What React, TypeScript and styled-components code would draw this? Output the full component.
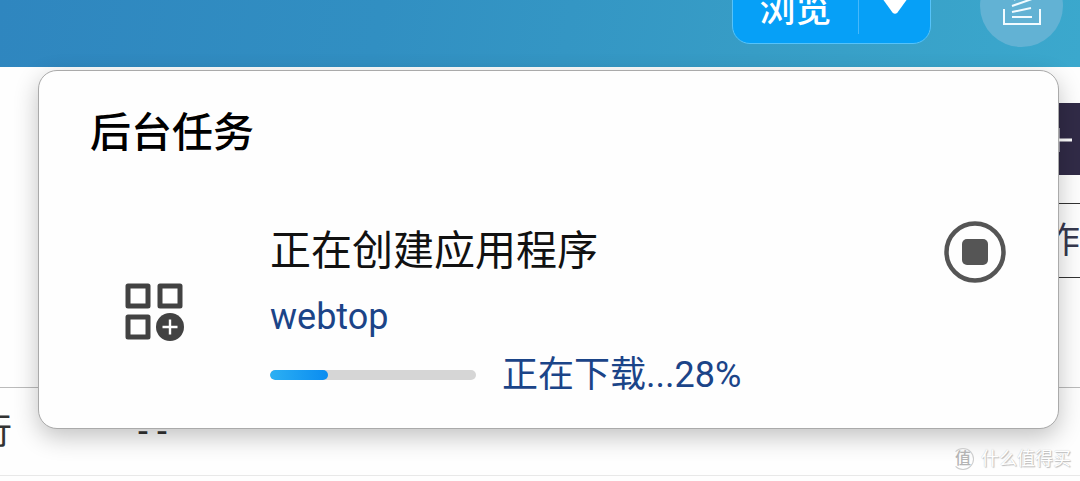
import React from 'react';
import styled, { createGlobalStyle } from 'styled-components';

const GlobalStyle = createGlobalStyle`
  * { box-sizing: border-box; }
  body {
    margin: 0;
    background: #fefefe;
    font-family: Roboto, "Noto Sans CJK SC", sans-serif;
  }
  button { font-family: inherit; padding: 0; border: 0; cursor: pointer; }
`;

const Page = styled.div`
  position: relative;
  min-height: 100vh;
  overflow: hidden;
`;

const Header = styled.header`
  display: flex;
  justify-content: flex-end;
  align-items: flex-end;
  height: 67px;
  padding: 0 17px 20px 0;
  overflow: hidden;
  background: linear-gradient(100deg, #2f86bf 0%, #318fc2 35%, #379dc6 70%, #3ba8cd 100%);
`;

const Actions = styled.div`
  display: flex;
  align-items: center;
  gap: 49px;
  height: 82px;
`;

const SplitButton = styled.div`
  display: flex;
  align-items: center;
  width: 199px;
  height: 76px;
  border: 1px solid #55c3fb;
  border-radius: 18px;
  background: #06a0f7;
`;

const BrowseButton = styled.button`
  flex: 1;
  height: 56px;
  border-right: 1px solid #45b8fb;
  background: transparent;
  color: #fff;
  font-size: 36px;
  font-weight: 500;
  line-height: 56px;
  padding-top: 4px;
`;

const MenuButton = styled.button`
  display: flex;
  align-items: center;
  justify-content: center;
  width: 71px;
  height: 56px;
  background: transparent;
`;

const TaskButton = styled.button`
  width: 83px;
  height: 82px;
  border-radius: 50%;
  background: #62b2d4;
`;

const Toolbar = styled.div`
  display: flex;
  justify-content: flex-end;
  padding: 36px 0 28px;
`;

const AddButton = styled.button`
  display: flex;
  align-items: center;
  justify-content: center;
  width: 44px;
  height: 72px;
  background: #312b47;
`;

const TableClip = styled.div`
  margin-left: -24px;
`;

const Table = styled.table`
  width: 100%;
  border-collapse: collapse;
  table-layout: fixed;
  color: #333;
  font-size: 36px;
  line-height: 40px;

  th, td { padding: 0; font-weight: 400; text-align: left; }
`;

const HeadRow = styled.tr`
  height: 74px;
  color: #36384e;

  th:last-child {
    border-top: 1px solid #333;
    border-bottom: 1px solid #333;
    text-align: right;
  }
`;

const BodyRow = styled.tr<{ $height: number; $line: string }>`
  height: ${p => p.$height}px;
  border-bottom: 1px solid ${p => p.$line};
`;

const StatusCol = styled.col`
  width: 162px;
`;

const ActionCol = styled.col`
  width: 80px;
`;

const Popup = styled.section`
  position: absolute;
  top: 70px;
  left: 38px;
  right: 21px;
  padding: 34px 52px 31px 51px;
  border: 1px solid #aaa;
  border-radius: 19px;
  background: #fefefe;
  box-shadow: 0 8px 24px rgba(0, 0, 0, 0.24);
`;

const PopupTitle = styled.h2`
  margin: 0 0 62px;
  color: #000;
  font-size: 41px;
  font-weight: 500;
  line-height: 56px;
`;

const Task = styled.div`
  display: flex;
  align-items: flex-start;
`;

const TaskIcon = styled.div`
  display: flex;
  align-items: center;
  align-self: stretch;
  width: 180px;
  padding: 4px 0 0 35px;
`;

const TaskBody = styled.div`
  flex: 1;
`;

const TaskName = styled.h3`
  margin: 0;
  color: #111;
  font-size: 41px;
  font-weight: 400;
  line-height: 56px;
  padding-bottom: 2px;
`;

const TaskTarget = styled.p`
  margin: 0;
  color: #1b4488;
  font-size: 36px;
  line-height: 72px;
`;

const ProgressRow = styled.div`
  display: flex;
  align-items: center;
  gap: 26px;
  color: #1b4488;
  font-size: 36px;
  line-height: 44px;
`;

const Progress = styled.progress`
  appearance: none;
  width: 206px;
  height: 10px;
  border: 0;
  border-radius: 5px;
  overflow: hidden;
  background: #d6d6d6;

  &::-webkit-progress-bar { background: #d6d6d6; }
  &::-webkit-progress-value {
    border-radius: 5px;
    background: linear-gradient(90deg, #2cb0f3, #0a8cf0);
  }
`;

const StopButton = styled.button`
  width: 62px;
  height: 62px;
  background: transparent;
  margin-top: -2px;
`;

const Watermark = styled.div`
  position: absolute;
  right: 9px;
  bottom: 9px;
  display: flex;
  align-items: center;
  gap: 7px;
  color: #fff;
  font-size: 18px;
  line-height: 26px;
  text-shadow: 1px 1px 1px #bbb, 0 0 1px #bbb;
`;

const Seal = styled.span`
  width: 22px;
  height: 22px;
  border: 1px solid #ccc;
  border-left-color: transparent;
  border-radius: 50%;
  color: #b4b4b4;
  font-size: 16px;
  font-weight: 500;
  line-height: 19px;
  text-align: center;
  text-shadow: none;
`;

const Drawing = styled.svg`
  display: block;
`;

const AppsIcon = () => (
  <Drawing width="60" height="60" viewBox="0 0 60 60" fill="none" stroke="#424242" strokeWidth="5" strokeLinejoin="round">
    <rect x="3" y="4" width="20" height="20" />
    <rect x="35" y="4" width="20" height="20" />
    <rect x="3" y="35" width="20" height="20" />
    <circle cx="45" cy="45" r="14" fill="#424242" stroke="none" />
    <path d="M45 37.5v15M37.5 45h15" stroke="#fff" strokeWidth="2.4" />
  </Drawing>
);

const StopIcon = () => (
  <Drawing width="62" height="62" viewBox="0 0 62 62">
    <circle cx="31" cy="31" r="28.5" fill="none" stroke="#555" strokeWidth="4.5" />
    <rect x="18" y="18" width="26" height="26" rx="5" fill="#555" />
  </Drawing>
);

const TrayIcon = () => (
  <Drawing width="83" height="82" viewBox="0 0 83 82" fill="none" stroke="#f2fbff" strokeWidth="2">
    <path d="M24 44v15h36V44" />
    <path d="M32 52h20M32 47l19-4M32 41l20-7M34 35l15-12" />
  </Drawing>
);

export default function App() {
  return (
    <Page>
      <GlobalStyle />
      <Header>
        <Actions>
          <SplitButton>
            <BrowseButton>浏览</BrowseButton>
            <MenuButton aria-label="▼">
              <Drawing width="26" height="20" viewBox="0 0 26 20">
                <path d="M0 2h26L15.5 16.5q-2.5 2.5-5 0z" fill="#fff" />
              </Drawing>
            </MenuButton>
          </SplitButton>
          <TaskButton aria-label="后台任务"><TrayIcon /></TaskButton>
        </Actions>
      </Header>
      <Toolbar>
        <AddButton aria-label="+">
          <Drawing width="28" height="28" viewBox="0 0 28 28" stroke="#fff" strokeWidth="3">
            <path d="M0 15h28M14 3v24" />
          </Drawing>
        </AddButton>
      </Toolbar>
      <TableClip>
        <Table>
          <colgroup><StatusCol /><col /><ActionCol /></colgroup>
          <thead>
            <HeadRow><th /><th /><th>作</th></HeadRow>
          </thead>
          <tbody>
            <BodyRow $height={110} $line="#bbb"><td /><td /><td /></BodyRow>
            <BodyRow $height={88} $line="#e8e8e8"><td>行</td><td>- -</td><td /></BodyRow>
          </tbody>
        </Table>
      </TableClip>
      <Popup>
        <PopupTitle>后台任务</PopupTitle>
        <Task>
          <TaskIcon><AppsIcon /></TaskIcon>
          <TaskBody>
            <TaskName>正在创建应用程序</TaskName>
            <TaskTarget>webtop</TaskTarget>
            <ProgressRow>
              <Progress value={28} max={100} aria-label="正在下载" />
              <span>正在下载...28%</span>
            </ProgressRow>
          </TaskBody>
          <StopButton aria-label="停止"><StopIcon /></StopButton>
        </Task>
      </Popup>
      <Watermark><Seal>值</Seal><span>什么值得买</span></Watermark>
    </Page>
  );
}
